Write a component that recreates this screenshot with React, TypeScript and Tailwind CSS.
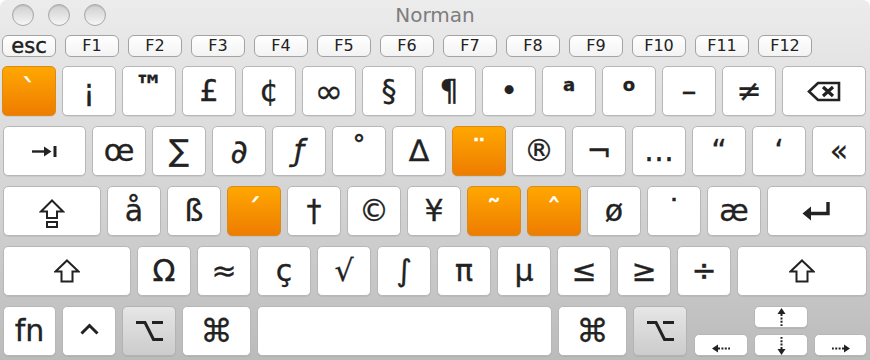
import React from "react";

type Tone = "white" | "orange" | "gray";

function Key({
  className = "",
  tone = "white",
  children,
}: {
  className?: string;
  tone?: Tone;
  children?: React.ReactNode;
}) {
  const toneCls =
    tone === "orange"
      ? "bg-linear-to-b from-[#ffa700] to-[#ee7c00] border-[#d98a1a] text-white"
      : tone === "gray"
      ? "bg-linear-to-b from-[#e6e6e6] to-[#cccccc] border-[#b3b3b3] text-[#222]"
      : "bg-white border-[#b7b7b7] text-[#222]";
  return (
    <div
      className={`flex shrink-0 items-center justify-center rounded-[5px] border leading-none shadow-[0_1px_0_rgba(0,0,0,0.06)] ${toneCls} ${className}`}
    >
      {children}
    </div>
  );
}

function FKey({ label, big }: { label: string; big?: boolean }) {
  return (
    <div
      className={`flex h-[22px] w-[54px] shrink-0 items-center justify-center rounded-[6px] border border-[#a3a3a3] bg-linear-to-b from-white to-[#f3f3f3] leading-none text-[#222] ${
        big ? "text-[21px] text-[#111] [-webkit-text-stroke:0.4px_#111]" : "text-[16px]"
      }`}
    >
      {label}
    </div>
  );
}

const DeleteIcon = () => (
  <svg width="34" height="21" viewBox="0 0 34 21" fill="none" stroke="#222">
    <path d="M11 2 H32 V19 H11 L2 10.5 Z" strokeWidth="2.6" strokeLinejoin="miter" />
    <path d="M16 6 L26 15 M26 6 L16 15" strokeWidth="3.2" />
  </svg>
);

const TabIcon = () => (
  <svg width="26" height="11" viewBox="0 0 26 11" fill="#222">
    <rect x="0" y="4.3" width="14" height="2.4" />
    <path d="M12 0.5 L19.5 5.5 L12 10.5 Z" />
    <rect x="21.5" y="0" width="3" height="11" />
  </svg>
);

const CapsIcon = () => (
  <svg width="26" height="30" viewBox="0 0 26 30" fill="none" stroke="#222" strokeWidth="2">
    <path d="M13 1.5 L24 12.5 H18 V19 H8 V12.5 H2 Z" strokeLinejoin="miter" />
    <rect x="8" y="23" width="10" height="5" />
  </svg>
);

const ShiftIcon = () => (
  <svg width="26" height="24" viewBox="0 0 26 24" fill="none" stroke="#222" strokeWidth="2">
    <path d="M13 1.5 L24.5 12.5 H18.5 V22.5 H7.5 V12.5 H1.5 Z" strokeLinejoin="miter" />
  </svg>
);

const ReturnIcon = () => (
  <svg width="30" height="21" viewBox="0 0 30 21" fill="none">
    <path d="M26 1 V12.5 H7" stroke="#222" strokeWidth="3.4" />
    <path d="M0.5 12.5 L9 5.5 V19.5 Z" fill="#222" />
  </svg>
);

const ControlIcon = () => (
  <svg width="19" height="12" viewBox="0 0 19 12" fill="none" stroke="#222" strokeWidth="3">
    <path d="M1.5 10.5 L9.5 2.5 L17.5 10.5" />
  </svg>
);

const OptionIcon = () => (
  <svg width="27" height="22" viewBox="0 0 27 22" fill="none" stroke="#222" strokeWidth="3">
    <path d="M0 2.5 H9 L17.5 19.5 H27" />
    <path d="M16 2.5 H27" />
  </svg>
);

const ArrowV = ({ down }: { down?: boolean }) => (
  <svg width="9" height="18" viewBox="0 0 9 18" fill="#222" className={down ? "rotate-180" : ""}>
    <path d="M4.5 0 L8.5 6 H0.5 Z" />
    <path d="M4.5 6 V18" stroke="#222" strokeWidth="2" strokeDasharray="2 1.4" />
  </svg>
);

const ArrowH = ({ right }: { right?: boolean }) => (
  <svg width="18" height="9" viewBox="0 0 18 9" fill="#222" className={right ? "rotate-180" : ""}>
    <path d="M0 4.5 L6 0.5 V8.5 Z" />
    <path d="M6 4.5 H18" stroke="#222" strokeWidth="2" strokeDasharray="2 1.4" />
  </svg>
);

const Light = () => (
  <div className="h-[22px] w-[22px] rounded-full border border-[#a9a9a9] bg-linear-to-b from-[#cfcfcf] to-[#f6f6f6] shadow-[inset_0_1px_1px_rgba(0,0,0,0.12)]" />
);

const Sup = ({ c }: { c: string }) => (
  <span className="-mt-[13px] text-[18px] font-bold">{c}</span>
);

const fkeys = ["F1", "F2", "F3", "F4", "F5", "F6", "F7", "F8", "F9", "F10", "F11", "F12"];
const row1: React.ReactNode[] = [
  "¡",
  <span className="-mt-[9px] text-[29px] font-bold">™</span>,
  "£",
  "¢",
  <span className="text-[34px]">∞</span>,
  "§",
  "¶",
  "•",
  <Sup c="a" />,
  <Sup c="o" />,
  "–",
  "≠",
];
const row2: [React.ReactNode, Tone][] = [
  ["œ", "white"], ["∑", "white"], [<span className="text-[33px]">∂</span>, "white"], [<span className="italic">ƒ</span>, "white"], ["˚", "white"], ["∆", "white"],
  ["¨", "orange"], ["®", "white"], ["¬", "white"], ["…", "white"], ["“", "white"], ["‘", "white"], ["«", "white"],
];
const row3: [string, Tone][] = [
  ["å", "white"], ["ß", "white"], ["´", "orange"], ["†", "white"], ["©", "white"], ["¥", "white"],
  ["˜", "orange"], ["ˆ", "orange"], ["ø", "white"], ["˙", "white"], ["æ", "white"],
];
const row4 = ["Ω", "≈", "ç", "√", "∫", "π", "µ", "≤", "≥", "÷"];

export default function App() {
  return (
    <div className="h-[360px] w-[870px] overflow-hidden bg-white">
      <div className="flex h-[360px] w-[870px] flex-col rounded-t-[7px] bg-linear-to-b from-[#ececec] via-[#d6d6d6] to-[#bbbbbb] font-['DejaVu_Sans',sans-serif]">
        {/* title bar */}
        <div className="grid h-[30px] shrink-0 grid-cols-[1fr_auto_1fr] items-center">
          <div className="flex gap-[14px] pl-[12px]">
            <Light />
            <Light />
            <Light />
          </div>
          <div className="text-[20px] leading-none text-[#7d7d7d]">Norman</div>
          <div />
        </div>

        {/* function row */}
        <div className="mt-[5px] flex gap-[9px] pl-[2px]">
          <FKey label="esc" big />
          {fkeys.map((f) => (
            <FKey key={f} label={f} />
          ))}
        </div>

        <div className="mt-[9px] flex flex-col gap-[10px] text-[30px] [-webkit-text-stroke:0.3px_currentColor]">
          {/* number row */}
          <div className="flex gap-[6px] pl-[2px]">
            <Key tone="orange" className="h-[50px] w-[54px]">`</Key>
            {row1.map((c, i) => (
              <Key key={i} className="h-[50px] w-[54px]">
                {c}
              </Key>
            ))}
            <Key className="h-[50px] w-[84px]">
              <DeleteIcon />
            </Key>
          </div>

          {/* tab row */}
          <div className="flex gap-[6px] pl-[3px]">
            <Key className="h-[50px] w-[83px]">
              <TabIcon />
            </Key>
            {row2.map(([c, t], i) => (
              <Key key={i} tone={t} className="h-[50px] w-[54px]">
                {c}
              </Key>
            ))}
          </div>

          {/* caps row */}
          <div className="flex gap-[6px] pl-[3px]">
            <Key className="h-[50px] w-[98px]">
              <span className="pt-[6px]">
                <CapsIcon />
              </span>
            </Key>
            {row3.map(([c, t]) => (
              <Key key={c} tone={t} className="h-[50px] w-[54px]">
                {c}
              </Key>
            ))}
            <Key className="h-[50px] w-[100px]">
              <ReturnIcon />
            </Key>
          </div>

          {/* shift row */}
          <div className="flex gap-[6px] pl-[3px]">
            <Key className="h-[50px] w-[128px]">
              <ShiftIcon />
            </Key>
            {row4.map((c) => (
              <Key key={c} className="h-[50px] w-[54px]">
                {c}
              </Key>
            ))}
            <Key className="h-[50px] w-[130px]">
              <ShiftIcon />
            </Key>
          </div>

          {/* bottom row */}
          <div className="flex gap-[6px] pl-[3px]">
            <Key className="h-[50px] w-[53px]">fn</Key>
            <Key className="h-[50px] w-[54px]">
              <span className="-mt-[5px]">
                <ControlIcon />
              </span>
            </Key>
            <Key tone="gray" className="h-[50px] w-[54px]">
              <OptionIcon />
            </Key>
            <Key className="h-[50px] w-[69px] text-[32px]">⌘</Key>
            <Key className="h-[50px] w-[295px]" />
            <Key className="h-[50px] w-[69px] text-[32px]">⌘</Key>
            <Key tone="gray" className="h-[50px] w-[54px]">
              <OptionIcon />
            </Key>
            <div className="ml-[1px] flex h-[50px] items-end gap-[6px]">
              <Key className="h-[22px] w-[54px] items-end pb-[2px]">
                <ArrowH />
              </Key>
              <div className="flex h-[50px] flex-col justify-between">
                <Key className="h-[22px] w-[54px] items-start pt-[1px]">
                  <ArrowV />
                </Key>
                <Key className="h-[22px] w-[54px] items-end">
                  <ArrowV down />
                </Key>
              </div>
              <Key className="h-[22px] w-[53px] items-end pb-[2px]">
                <ArrowH right />
              </Key>
            </div>
          </div>
        </div>
      </div>
    </div>
  );
}
